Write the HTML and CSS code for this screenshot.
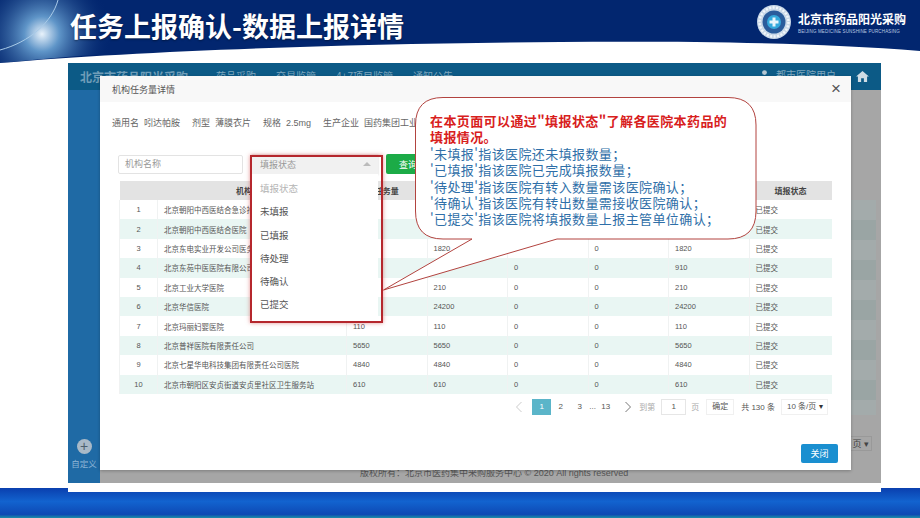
FILE: index.html
```html
<!DOCTYPE html>
<html lang="zh-CN">
<head>
    <meta charset="utf-8">
    <title>任务上报确认-数据上报详情</title>
    <link rel="stylesheet" href="styles.css">
</head>
<body>
    <div class="slide">
        <!-- 页头曲线背景 -->
        <svg class="banner-bg" width="920" height="70" viewBox="0 0 920 70">
            <defs>
                <radialGradient id="glow" cx="42" cy="34" r="70" gradientUnits="userSpaceOnUse">
                    <stop offset="0" stop-color="#e8f2fb"/>
                    <stop offset="0.25" stop-color="#5f95c8"/>
                    <stop offset="1" stop-color="#02266f" stop-opacity="0"/>
                </radialGradient>
            </defs>
            <path d="M0 63 C150 50 350 44 560 42 C700 41 820 43 920 51 V0 H0 Z" fill="#02266f"/>
            <path d="M0 63 C50 58 100 54 150 51 V0 H0 Z" fill="url(#glow)"/>
            <path d="M58 0 C52 22 30 42 0 50" fill="none" stroke="#a9cbe8" stroke-width="1"/>
        </svg>

        <header class="banner">
            <h1 class="slide-title">任务上报确认-数据上报详情</h1>
            <div class="brand">
                <svg class="brand-logo" width="36" height="36" viewBox="0 0 36 36">
                    <circle cx="18" cy="18" r="17" fill="#c9d8e8"/>
                    <circle cx="18" cy="18" r="14.500" fill="none" stroke="#f2f6fa" stroke-width="2.500" stroke-dasharray="2 1.500"/>
                    <circle cx="18" cy="18" r="11.500" fill="#2a5c9c"/>
                    <circle cx="18" cy="18" r="7" fill="#34a9dc"/>
                    <path d="M16.500 13.500h3v3h3v3h-3v3h-3v-3h-3v-3h3z" fill="#e8f6fc"/>
                </svg>
                <div>
                    <div class="brand-name">北京市药品阳光采购</div>
                    <div class="brand-sub">BEIJING MEDICINE SUNSHINE PURCHASING</div>
                </div>
            </div>
        </header>

        <div class="bottom-bar"></div>

        <div class="window">
            <div class="topbar">
                <span class="site-name">北京市药品阳光采购</span>
                <nav class="site-nav">
                    <span>药品采购</span>
                    <span>交易监管</span>
                    <span>4+7项目监管</span>
                    <span>通知公告</span>
                </nav>
                <span class="user">
                    <svg width="9" height="10" viewBox="0 0 9 10"><circle cx="4.500" cy="2.600" r="2.400" fill="#b4c6d2"/><path d="M0 10c0-3 2-4 4.500-4S9 7 9 10z" fill="#b4c6d2"/></svg>
                    都市医院用户
                </span>
                <svg class="home" width="13" height="11" viewBox="0 0 14 12"><path d="M7 0 14 6h-2v6H8.500V8h-3v4H2V6H0z" fill="#cfdce5"/></svg>
            </div>
            <div class="window-body">
                <aside class="sidebar">
                    <span class="add-btn">+</span>
                    <span class="add-label">自定义</span>
                </aside>
                <main class="backdrop">
                    <div class="backdrop-rows"></div>
                    <div class="backdrop-pager">页 ▾</div>
                </main>
            </div>
            <footer class="copyright">版权所有：北京市医药集中采购服务中心 © 2020 All rights reserved</footer>
        </div>

        <div class="modal">
            <div class="modal-head">
                <span>机构任务量详情</span>
                <span class="modal-close">×</span>
            </div>
            <div class="drug-info">
                <span>通用名&nbsp; 吲达帕胺</span>
                <span>剂型&nbsp; 薄膜衣片</span>
                <span>规格&nbsp; 2.5mg</span>
                <span>生产企业&nbsp; 国药集团工业有</span>
            </div>
            <div class="filters">
                <div class="name-input">机构名称</div>
                <div class="status-select">
                    <span>填报状态</span>
                    <span class="caret"></span>
                    <ul class="status-menu">
                        <li class="muted">填报状态</li>
                        <li>未填报</li>
                        <li>已填报</li>
                        <li>待处理</li>
                        <li>待确认</li>
                        <li>已提交</li>
                    </ul>
                    <div class="status-mark"></div>
                </div>
                <button class="btn-query">查询</button>
            </div>
            <table class="detail-table">
                <colgroup>
                    <col class="c-no"><col class="c-name"><col class="c-num"><col class="c-num"><col class="c-num"><col class="c-num"><col class="c-num"><col>
                </colgroup>
                <thead>
                    <tr><th></th><th class="center">机构名称</th><th class="center">任务量</th><th></th><th></th><th></th><th></th><th class="center">填报状态</th></tr>
                </thead>
                <tbody>
                    <tr><td class="center">1</td><td>北京朝阳中西医结合急诊抢救中心</td><td></td><td></td><td></td><td></td><td></td><td>已提交</td></tr>
                    <tr><td class="center">2</td><td>北京朝阳中西医结合医院</td><td></td><td></td><td></td><td></td><td></td><td>已提交</td></tr>
                    <tr><td class="center">3</td><td>北京东电实业开发公司医务室</td><td></td><td>1820</td><td>0</td><td>0</td><td>1820</td><td>已提交</td></tr>
                    <tr><td class="center">4</td><td>北京东苑中医医院有限公司</td><td></td><td></td><td>0</td><td>0</td><td>910</td><td>已提交</td></tr>
                    <tr><td class="center">5</td><td>北京工业大学医院</td><td></td><td>210</td><td>0</td><td>0</td><td>210</td><td>已提交</td></tr>
                    <tr><td class="center">6</td><td>北京华信医院</td><td></td><td>24200</td><td>0</td><td>0</td><td>24200</td><td>已提交</td></tr>
                    <tr><td class="center">7</td><td>北京玛丽妇婴医院</td><td>110</td><td>110</td><td>0</td><td>0</td><td>110</td><td>已提交</td></tr>
                    <tr><td class="center">8</td><td>北京普祥医院有限责任公司</td><td>5650</td><td>5650</td><td>0</td><td>0</td><td>5650</td><td>已提交</td></tr>
                    <tr><td class="center">9</td><td>北京七星华电科技集团有限责任公司医院</td><td>4840</td><td>4840</td><td>0</td><td>0</td><td>4840</td><td>已提交</td></tr>
                    <tr><td class="center">10</td><td>北京市朝阳区安贞街道安贞里社区卫生服务站</td><td>610</td><td>610</td><td>0</td><td>0</td><td>610</td><td>已提交</td></tr>
                </tbody>
            </table>
            <div class="pager">
                <svg class="arrow" width="14" height="12" viewBox="0 0 14 12"><path d="M9.500 1 4.500 6l5 5" fill="none" stroke="#ccc"/></svg>
                <span class="page on">1</span>
                <span class="page">2</span>
                <span class="page">3</span>
                <span class="dots">...</span>
                <span class="page">13</span>
                <svg class="arrow next" width="14" height="12" viewBox="0 0 14 12"><path d="M4.500 1 9.500 6l-5 5" fill="none" stroke="#777"/></svg>
                <span class="off">到第</span>
                <span class="page-input">1</span>
                <span class="off">页</span>
                <span class="page-go">确定</span>
                <span>共 130 条</span>
                <span class="page-size">10 条/页 <i>▾</i></span>
            </div>
            <div class="modal-foot">
                <button class="btn-close">关闭</button>
            </div>
        </div>

        <!-- 说明气泡 -->
        <div class="callout">
            <svg class="callout-shape" width="375" height="195" viewBox="383 97 375 195">
                <path d="M443 97.500H728Q756 97.500 756 125V211Q756 239 728 239H557L383.500 290L472 239H443Q415.500 239 415.500 211V125Q415.500 97.500 443 97.500Z" fill="#fff" stroke="#b2433f"/>
            </svg>
            <div class="callout-text">
                <p class="lead">在本页面可以通过"填报状态"了解各医院本药品的填报情况。</p>
                <p>'未填报'指该医院还未填报数量；</p>
                <p>'已填报'指该医院已完成填报数量；</p>
                <p>'待处理'指该医院有转入数量需该医院确认；</p>
                <p>'待确认'指该医院有转出数量需接收医院确认；</p>
                <p>'已提交'指该医院将填报数量上报主管单位确认；</p>
            </div>
        </div>
    </div>
</body>
</html>
```

FILE: styles.css
```css
* {
    box-sizing: border-box;
}

body {
    margin: 0;
    background-color: #fff;
    font-family: "Liberation Sans", "Noto Sans CJK SC", sans-serif;
}

.slide {
    position: relative;
    width: 920px;
    height: 518px;
    overflow: hidden;
    background-color: #fff;
}

.banner-bg {
    position: absolute;
    top: 0;
    left: 0;
}

.banner {
    position: relative;
    display: flex;
    justify-content: space-between;
    align-items: flex-start;
    height: 63px;
    padding: 4px 14px 0 70px;
}

.slide-title {
    margin: 3px 0 0;
    color: #fff;
    font-size: 27px;
    line-height: 38px;
    font-weight: 700;
    font-family: "Noto Sans CJK SC", sans-serif;
    text-shadow: 0 1px 2px rgba(0, 0, 0, 0.4);
}

.brand {
    display: flex;
    align-items: center;
    gap: 6px;
}

.brand-name {
    color: #fff;
    font-size: 12px;
    line-height: 15px;
    font-weight: 700;
    margin-top: 3px;
}

.brand-sub {
    color: #b9c9e2;
    font-size: 4.500px;
    line-height: 7px;
    white-space: nowrap;
    letter-spacing: 0.15px;
}

.bottom-bar {
    position: absolute;
    left: 0;
    right: 0;
    top: 488px;
    bottom: 0;
    background: linear-gradient(#0a3fae, #1263cf 45%, #0d49b4 88%, #1c8fa8);
}

/* 后面的系统页面 */
.window {
    position: relative;
    display: flex;
    flex-direction: column;
    width: 813px;
    height: 429px;
    margin-left: 68px;
    background-color: #fff;
}

.topbar {
    display: flex;
    align-items: flex-start;
    height: 27px;
    padding: 5px 12px 0 12px;
    background-color: #0c5a86;
    color: #7fa6bd;
    font-size: 10px;
}

.site-name {
    width: 136px;
    font-size: 12px;
    font-weight: 700;
    color: #6f9db8;
}

.site-nav {
    display: flex;
    gap: 20px;
    flex: 1;
}

.user {
    display: flex;
    align-items: center;
    gap: 7px;
    height: 13px;
    margin-right: 20px;
}

.home {
    margin-top: 3px;
}

.window-body {
    display: flex;
    height: 393px;
}

.sidebar {
    display: flex;
    flex-direction: column;
    align-items: center;
    justify-content: flex-end;
    width: 32px;
    padding-bottom: 13px;
    background-color: #1f6aa5;
}

.add-btn {
    width: 15px;
    height: 15px;
    border-radius: 50%;
    background-color: #a9b9c7;
    color: #4d5f6e;
    font-size: 14px;
    line-height: 14px;
    text-align: center;
}

.add-label {
    margin-top: 4px;
    color: #8fb6d6;
    font-size: 8.500px;
    line-height: 12px;
}

.backdrop {
    position: relative;
    flex: 1;
    padding: 110px 5px 0 0;
    background-color: #a6a6a6;
}

.backdrop-rows {
    height: 215px;
    background: repeating-linear-gradient(#a3abab 0 20px, #9aa5a4 20px 40px);
}

.backdrop-pager {
    position: absolute;
    right: 9px;
    top: 346px;
    width: 21px;
    height: 15px;
    color: #444;
    font-size: 9px;
    line-height: 15px;
    text-align: right;
    border: 1px solid #999;
    border-left: none;
    padding-right: 2px;
}

.copyright {
    position: relative;
    height: 13px;
    margin: -13px 0 0 32px;
    padding-left: 260px;
    background-color: #a6a6a6;
    color: #555;
    font-size: 9px;
    line-height: 7px;
    white-space: nowrap;
}

/* 弹窗 */
.modal {
    position: absolute;
    left: 100px;
    top: 76px;
    display: flex;
    flex-direction: column;
    width: 751px;
    height: 394px;
    background-color: #fff;
    color: #555;
    font-size: 9px;
    box-shadow: 0 1px 3px rgba(0, 0, 0, 0.25);
}

.modal-head {
    display: flex;
    justify-content: space-between;
    align-items: center;
    flex: none;
    height: 26px;
    padding: 0 10px 0 12px;
    background-color: #f8f8f8;
}

.modal-close {
    color: #555;
    font-size: 17px;
    line-height: 26px;
}

.drug-info {
    display: flex;
    gap: 12px;
    height: 52px;
    padding: 15px 0 0 12px;
    white-space: nowrap;
    color: #666;
    font-size: 9px;
    line-height: 13px;
}

.filters {
    display: flex;
    align-items: center;
    gap: 9px;
    height: 20px;
    padding-left: 18px;
}

.name-input {
    width: 125px;
    height: 19px;
    padding-left: 6px;
    border: 1px solid #e3e3e3;
    border-radius: 2px;
    color: #999;
    line-height: 17px;
}

.status-select {
    position: relative;
    display: flex;
    justify-content: space-between;
    align-items: center;
    width: 126px;
    height: 20px;
    padding: 0 7px 0 8px;
    background-color: #f1f1f1;
    color: #999;
    box-shadow: 0 1px 2px rgba(0, 0, 0, 0.2);
}

.caret {
    width: 0;
    height: 0;
    border-left: 4px solid transparent;
    border-right: 4px solid transparent;
    border-bottom: 4px solid #bbb;
}

.status-menu {
    position: absolute;
    left: 0;
    top: 20px;
    z-index: 2;
    width: 126px;
    height: 148px;
    margin: 0;
    padding: 3px 0 0 8px;
    list-style: none;
    background-color: #fff;
    color: #555;
    font-size: 9.500px;
    line-height: 23.300px;
}

.status-menu .muted {
    color: #b5b5b5;
}

.status-mark {
    position: absolute;
    left: -2px;
    top: 1px;
    z-index: 3;
    width: 133px;
    height: 168px;
    border: 2.500px solid #b5272d;
    box-shadow: 0 0 4px rgba(200, 40, 40, 0.5);
}

.btn-query {
    width: 44px;
    height: 20px;
    margin-left: -1px;
    padding: 0;
    border: none;
    border-radius: 2px;
    background-color: #1cab47;
    color: #fff;
    font: inherit;
}

.detail-table {
    flex: none;
    width: 713px;
    margin: 7px 0 0 19px;
    border-collapse: collapse;
    table-layout: fixed;
    font-size: 7.500px;
}

.c-no {
    width: 38px;
}

.c-name {
    width: 189px;
}

.c-num {
    width: 80.500px;
}

.detail-table th {
    height: 19px;
    padding: 0 0 0 6px;
    background-color: #e3e3e3;
    color: #444;
    font-size: 8px;
    text-align: left;
}

.detail-table td {
    height: 19.400px;
    padding: 0 0 0 6px;
    border-left: 1px solid #f0f2f2;
    white-space: nowrap;
    overflow: hidden;
}

.detail-table tbody tr:nth-child(even) {
    background-color: #e9f6f3;
}

.detail-table .center {
    padding: 0;
    text-align: center;
}

.pager {
    display: flex;
    align-items: center;
    flex: none;
    justify-content: flex-end;
    height: 16px;
    margin-top: 5px;
    padding-right: 23px;
    font-size: 8px;
}

.pager .off {
    color: #aaa;
}

.arrow {
    margin: 0 6px 0 6px;
}

.arrow.next {
    margin-right: 4px;
}

.page {
    width: 19px;
    line-height: 16px;
    text-align: center;
}

.page.on {
    background-color: #5bb5c9;
    color: #fff;
}

.dots {
    width: 7px;
    text-align: center;
}

.page-input {
    width: 25px;
    height: 16px;
    margin: 0 5px 0 6px;
    border: 1px solid #e6e6e6;
    line-height: 14px;
    text-align: center;
}

.page-go {
    width: 28px;
    height: 16px;
    margin: 0 7px 0 7px;
    border: 1px solid #f0f0f0;
    line-height: 14px;
    text-align: center;
}

.page-size {
    width: 47px;
    height: 16px;
    margin-left: 6px;
    padding-left: 5px;
    border: 1px solid #f0f0f0;
    line-height: 14px;
    white-space: nowrap;
}

.page-size i {
    font-style: normal;
    color: #333;
}

.modal-foot {
    display: flex;
    justify-content: flex-end;
    padding: 29px 13px 0 0;
}

.btn-close {
    width: 37px;
    height: 19px;
    padding: 0;
    border: none;
    border-radius: 2px;
    background-color: #1a8fd0;
    color: #fff;
    font: inherit;
}

/* 气泡 */
.callout {
    position: absolute;
    left: 383px;
    top: 97px;
    width: 375px;
    height: 195px;
}

.callout-shape {
    position: absolute;
    top: 0;
    left: 0;
}

.callout-text {
    position: relative;
    width: 312px;
    padding: 16px 0 0 47px;
    box-sizing: content-box;
    color: #2f6fa8;
    font-family: "Noto Sans CJK SC", sans-serif;
    font-size: 13px;
    line-height: 16.400px;
    letter-spacing: 0.4px;
}

.callout-text p {
    margin: 0;
}

.callout-text .lead {
    width: 300px;
    color: #d8201c;
    font-weight: 700;
}
```
